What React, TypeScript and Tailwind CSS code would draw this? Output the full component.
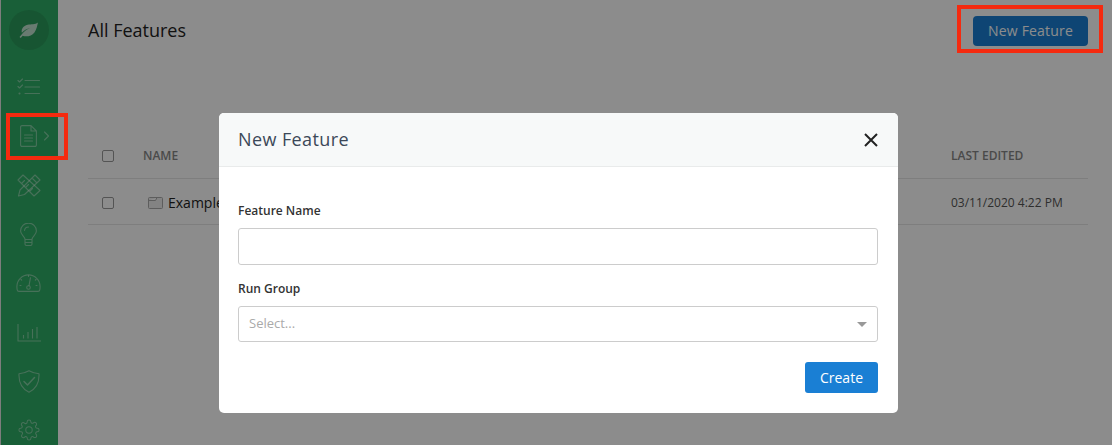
import React from 'react';

const iconProps = {
  fill: 'none',
  stroke: 'currentColor',
  strokeWidth: 1.1,
  strokeLinecap: 'round' as const,
  strokeLinejoin: 'round' as const,
};

const ListIcon = () => (
  <svg width="23" height="18" viewBox="0 0 23 18" {...iconProps}>
    <path d="M1 2.500l1.500 1.500L5.500 1M1 8.500l1.500 1.500L5.500 7M8 2.500h14.500M8 9h14.500M8 15.500h14.500" />
    <circle cx="2.500" cy="15.500" r="0.500" />
  </svg>
);

const DocIcon = () => (
  <svg width="17" height="22" viewBox="0 0 17 22" {...iconProps}>
    <path d="M11 .6H2A1.400 1.400 0 0 0 .6 2v18A1.400 1.400 0 0 0 2 21.400h13a1.400 1.400 0 0 0 1.400-1.400V6zM11 .6V6h5.400M4.500 10h8M4.500 13h8M4.500 16h8" />
  </svg>
);

const ToolsIcon = () => (
  <svg width="24" height="23" viewBox="0 0 24 23" {...iconProps}>
    <path d="M6 1L1 6l16 16 6-5.500zM5 9l2.500-2.500M9 13l2.500-2.500M13 17l2.500-2.500" />
    <path d="M18 1l5 5L7.500 20.500 1.500 22l1.500-6zM15 4l5 5" />
  </svg>
);

const BulbIcon = () => (
  <svg width="17" height="23" viewBox="0 0 17 23" {...iconProps}>
    <path d="M5 16.500c0-3-4.400-4.500-4.400-8.500a7.900 7.900 0 0 1 15.800 0c0 4-4.400 5.500-4.400 8.500zM5 19.500h7M5 16.500v4.500a1.500 1.500 0 0 0 1.500 1.500h4a1.500 1.500 0 0 0 1.500-1.500v-4.500M4.500 7.500a4 4 0 0 1 4-3.500" />
  </svg>
);

const GaugeIcon = () => (
  <svg width="25" height="21" viewBox="0 0 25 21" className="-translate-y-[2px]" {...iconProps}>
    <path d="M3 20.400h19a1.800 1.800 0 0 0 1.800-1.500c.2-1 .3-2.400.3-3.400A11.600 11.600 0 0 0 .9 15.500c0 1 .1 2.400.3 3.400A1.800 1.800 0 0 0 3 20.400z" />
    <circle cx="12.500" cy="16.500" r="1.800" />
    <path d="M13 14.700l1.500-8M12.500 4.500v1M5 8.500l.7.7M20 8.500l-.7.7M4 14.500h1M20 14.500h1" />
  </svg>
);

const ChartIcon = () => (
  <svg width="24" height="18" viewBox="0 0 24 18" className="translate-y-px" {...iconProps} strokeLinecap="butt">
    <path d="M1 0v17h23M6.500 11v3.500M11 8v6.500M15.500 5v9.500M20 3v11.500" />
  </svg>
);

const ShieldIcon = () => (
  <svg width="22" height="23" viewBox="0 0 22 23" {...iconProps}>
    <path d="M11 .8c3 1.700 6 2.700 10 2.900.4 8-1.500 14.500-10 18.500C2.500 18.200.6 11.700 1 3.700 5 3.500 8 2.500 11 .8z" />
    <path d="M6 11.500l3.500 3.500L16.500 7.500" strokeWidth="1.500" />
  </svg>
);

const GearIcon = () => (
  <svg width="22" height="22" viewBox="0 0 24 24" {...iconProps}>
    <circle cx="12" cy="12" r="3.500" />
    <path d="M19.400 15a1.650 1.650 0 0 0 .33 1.820l.06.06a2 2 0 1 1-2.830 2.830l-.06-.06a1.650 1.650 0 0 0-2.800 1.170V21a2 2 0 1 1-4 0v-.09A1.650 1.650 0 0 0 7.300 19.700l-.06.06a2 2 0 1 1-2.830-2.830l.06-.06A1.650 1.650 0 0 0 3.300 14H3a2 2 0 1 1 0-4h.09A1.650 1.650 0 0 0 4.300 7.300l-.06-.06a2 2 0 1 1 2.830-2.830l.06.06A1.650 1.650 0 0 0 10 3.300V3a2 2 0 1 1 4 0v.09a1.650 1.650 0 0 0 2.800 1.170l.06-.06a2 2 0 1 1 2.830 2.830l-.06.06A1.650 1.650 0 0 0 20.700 10H21a2 2 0 1 1 0 4h-.09a1.650 1.650 0 0 0-1.510 1z" />
  </svg>
);

const navIcons = [<ToolsIcon />, <BulbIcon />, <GaugeIcon />, <ChartIcon />, <ShieldIcon />, <GearIcon />];

const Sidebar = () => (
  <aside className="w-[58px] shrink-0 border-l border-l-[#e4e4e4] pr-[2px] bg-[#2fad66] text-white/40 flex flex-col items-center overflow-hidden h-[445px]">
    <div className="mt-2.5 w-10 h-10 rounded-full bg-[#2a9c5c] flex items-center justify-center">
      <svg width="21" height="17" viewBox="0 0 22 18" className="text-white/70">
        <path
          fill="currentColor"
          d="M21 .5c-3 2.300-7 1.500-11 2.500C5.500 4.200 3 7.500 4 11.500c2-2.500 5-4.500 9-5.500-3.500 1.500-7 4-9.500 7.500L1.500 16l1.300 1 2-2.500c4 1.500 9.500.5 12.500-3.500 2.300-3 3-7.500 3.700-10.500z"
        />
      </svg>
    </div>
    <div className="mt-[25px] h-6 flex items-center justify-center"><ListIcon /></div>
    <div className="mt-[25px] h-6 flex items-center justify-center relative w-full">
      <DocIcon />
      <span className="absolute left-[42px] top-[7px]">
        <svg width="7" height="10" viewBox="0 0 7 10" {...iconProps}><path d="M1.500 1l4 4-4 4" /></svg>
      </span>
    </div>
    <div className="flex flex-col items-center gap-[25px] mt-[25px]">
      {navIcons.map((icon, i) => (
        <div key={i} className="h-6 flex items-center justify-center">{icon}</div>
      ))}
    </div>
  </aside>
);

const Checkbox = () => <span className="block w-[12px] h-[12px] rounded-[2px] border border-[#999] bg-white" />;

const Page = () => (
  <main className="flex-1 pl-[30px] pr-6 text-[#222]">
    <div className="flex items-center justify-between h-[60px] pt-px">
      <h1 className="text-[18px]">All Features</h1>
      <button className="w-[115px] h-[30px] rounded-[4px] bg-[#1a7fd4] text-white text-[14px] font-medium tracking-[0.2px]">
        New Feature
      </button>
    </div>
    <div className="mt-[72px] flex items-center h-[47px] pt-0.5 border-b border-[#e6e6e6] pl-[14px] text-[12px] font-semibold text-[#888]">
      <Checkbox />
      <span className="ml-[29px] flex-1">NAME</span>
      <span className="w-[137px]">LAST EDITED</span>
    </div>
    <div className="flex items-center h-[46px] pt-0.5 border-b border-[#e6e6e6] pl-[14px] text-[12px]">
      <Checkbox />
      <svg width="15" height="14" viewBox="0 0 15 14" fill="#eee" stroke="#aaa" className="ml-[34px]">
        <path d="M.5 2.500a1 1 0 0 1 1-1h12a1 1 0 0 1 1 1v9a1 1 0 0 1-1 1h-12a1 1 0 0 1-1-1zM.5 4.500h7l1.500-3" />
      </svg>
      <span className="ml-[5px] flex-1 text-[14px]">Example</span>
      <span className="w-[137px] text-[#555]">03/11/2020 4:22 PM</span>
    </div>
  </main>
);

const Modal = () => (
  <div className="absolute inset-0 bg-black/45 flex justify-center items-start pt-[113px] pl-[5px] z-10">
    <div className="w-[679px] h-[300px] bg-white rounded-[5px] overflow-hidden flex flex-col">
      <div className="h-[54px] shrink-0 bg-[#f7f9f9] border-b border-[#e9ebeb] flex items-center justify-between pl-[19px] pr-[19px]">
        <h2 className="text-[18px] tracking-[0.4px] text-[#3c4858] font-medium">New Feature</h2>
        <svg width="16" height="16" viewBox="0 0 16 16" fill="none" stroke="#222" strokeWidth="2">
          <path d="M2 2l12 12M14 2L2 14" />
        </svg>
      </div>
      <div className="pl-[19px] pr-5 pt-[35px] flex flex-col flex-1">
        <label className="text-[12px] font-semibold leading-[18px] text-[#333]">Feature Name</label>
        <input className="mt-2 h-[37px] rounded-[3px] border border-[#ccc] outline-none" />
        <label className="mt-[15px] text-[12px] font-semibold leading-[18px] text-[#333]">Run Group</label>
        <div className="mt-2 h-[36px] rounded-[3px] border border-[#ccc] flex items-center justify-between pl-2.5 pr-[10px]">
          <span className="text-[13px] text-[#aaa]">Select...</span>
          <span className="w-0 h-0 border-x-[5px] border-x-transparent border-t-[5px] border-t-[#999]" />
        </div>
        <div className="mt-5 flex justify-end">
          <button className="w-[73px] h-[31px] rounded-[3px] bg-[#1a7fd4] text-white text-[14px] font-medium">Create</button>
        </div>
      </div>
    </div>
  </div>
);

export default function App() {
  return (
    <div className="relative w-[1112px] h-[445px] overflow-hidden flex bg-white font-['Open_Sans','Noto_Sans',sans-serif]">
      <Sidebar />
      <Page />
      <Modal />
      {/* red callouts drawn on top of the dimmed page */}
      <div className="absolute z-20 left-[6px] top-[113px] w-[62px] h-[47px] border-[4px] border-[#f52a0f]" />
      <div className="absolute z-20 left-[957px] top-[5px] w-[146px] h-[48px] border-[4px] border-[#f52a0f]" />
    </div>
  );
}
